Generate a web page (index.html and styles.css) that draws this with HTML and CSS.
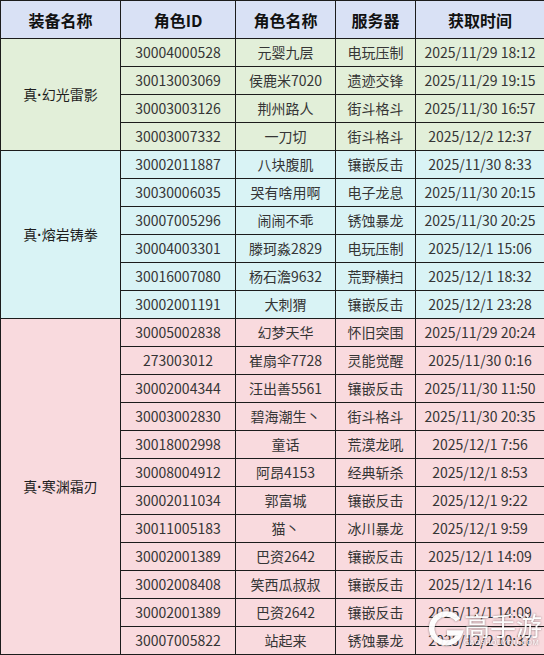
FILE: index.html
```html
<!DOCTYPE html>
<html lang="zh">
<head>
<meta charset="utf-8">
<link rel="stylesheet" href="styles.css">
</head>
<body>
<div class="wrap">
<table class="tbl">
<colgroup>
<col class="c1"><col class="c2"><col class="c3"><col class="c4"><col class="c5">
</colgroup>
<thead>
<tr class="head"><th>装备名称</th><th>角色ID</th><th>角色名称</th><th>服务器</th><th>获取时间</th></tr>
</thead>
<tbody class="g1">
<tr><td rowspan="4" class="equip">真<span class="dot">·</span>幻光雷影</td><td>30004000528</td><td>元婴九层</td><td>电玩压制</td><td>2025/11/29 18:12</td></tr>
<tr><td>30013003069</td><td>侯鹿米7020</td><td>遗迹交锋</td><td>2025/11/29 19:15</td></tr>
<tr><td>30003003126</td><td>荆州路人</td><td>街斗格斗</td><td>2025/11/30 16:57</td></tr>
<tr><td>30003007332</td><td>一刀切</td><td>街斗格斗</td><td>2025/12/2 12:37</td></tr>
</tbody>
<tbody class="g2">
<tr><td rowspan="6" class="equip">真<span class="dot">·</span>熔岩铸拳</td><td>30002011887</td><td>八块腹肌</td><td>镶嵌反击</td><td>2025/11/30 8:33</td></tr>
<tr><td>30030006035</td><td>哭有啥用啊</td><td>电子龙息</td><td>2025/11/30 20:15</td></tr>
<tr><td>30007005296</td><td>闹闹不乖</td><td>锈蚀暴龙</td><td>2025/11/30 20:25</td></tr>
<tr><td>30004003301</td><td>滕珂淼2829</td><td>电玩压制</td><td>2025/12/1 15:06</td></tr>
<tr><td>30016007080</td><td>杨石澹9632</td><td>荒野横扫</td><td>2025/12/1 18:32</td></tr>
<tr><td>30002001191</td><td>大刺猬</td><td>镶嵌反击</td><td>2025/12/1 23:28</td></tr>
</tbody>
<tbody class="g3">
<tr><td rowspan="12" class="equip">真<span class="dot">·</span>寒渊霜刃</td><td>30005002838</td><td>幻梦天华</td><td>怀旧突围</td><td>2025/11/29 20:24</td></tr>
<tr><td>273003012</td><td>崔扇伞7728</td><td>灵能觉醒</td><td>2025/11/30 0:16</td></tr>
<tr><td>30002004344</td><td>汪出善5561</td><td>镶嵌反击</td><td>2025/11/30 11:50</td></tr>
<tr><td>30003002830</td><td>碧海潮生丶</td><td>街斗格斗</td><td>2025/11/30 20:35</td></tr>
<tr><td>30018002998</td><td>童话</td><td>荒漠龙吼</td><td>2025/12/1 7:56</td></tr>
<tr><td>30008004912</td><td>阿昂4153</td><td>经典斩杀</td><td>2025/12/1 8:53</td></tr>
<tr><td>30002011034</td><td>郭富城</td><td>镶嵌反击</td><td>2025/12/1 9:22</td></tr>
<tr><td>30011005183</td><td>猫丶</td><td>冰川暴龙</td><td>2025/12/1 9:59</td></tr>
<tr><td>30002001389</td><td>巴资2642</td><td>镶嵌反击</td><td>2025/12/1 14:09</td></tr>
<tr><td>30002008408</td><td>笑西瓜叔叔</td><td>镶嵌反击</td><td>2025/12/1 14:16</td></tr>
<tr><td>30002001389</td><td>巴资2642</td><td>镶嵌反击</td><td>2025/12/1 14:09</td></tr>
<tr><td>30007005822</td><td>站起来</td><td>锈蚀暴龙</td><td>2025/12/2 10:37</td></tr>
</tbody>
</table>
<div class="mark">
<svg class="mark-g" width="36" height="36" viewBox="0 0 36 36"><path d="M30 9 A14.5 14.5 0 1 0 32 22 L19 22" fill="none" stroke="#fff" stroke-width="5.5" stroke-linecap="butt"/></svg>
<div class="mark-txt"><span class="mark-cn">高手游</span><span class="mark-en">GAOSHOUYOU.COM</span></div>
</div>
</div>
</body>
</html>
```
FILE: styles.css
```css
html, body { margin: 0; padding: 0; background: #fff; }
body { font-family: "Noto Sans CJK SC", "Open Sans", sans-serif; }
.wrap { position: relative; width: 544px; height: 655px; overflow: hidden; }
.tbl { border-collapse: collapse; table-layout: fixed; width: 544px; }
.c1 { width: 120px; } .c2 { width: 115px; } .c3 { width: 100px; } .c4 { width: 80px; } .c5 { width: 129px; }
.tbl th, .tbl td { border: 1px solid #1c1c1c; padding: 0; text-align: center; white-space: nowrap; overflow: hidden; }
.head { height: 38px; background: #d9e1f5; }
.head th { font-size: 16px; font-weight: 700; color: #111; }
.tbl td { height: 27px; font-size: 14px; color: #353535; line-height: 27px; }
.g1 td { background: #e2efd9; }
.g2 td { background: #d9f3f5; }
.g3 td { background: #f9dade; }
.equip { color: #1e1e1e !important; }
.dot { font-family: "Liberation Sans", sans-serif; font-weight: 700; }
.mark { position: absolute; left: 428px; top: 611px; display: flex; align-items: flex-start; opacity: 0.95; filter: drop-shadow(0 0 1px rgba(0,0,0,0.45)); }
.mark-g { display: block; flex: none; }
.mark-txt { display: flex; flex-direction: column; align-items: flex-start; width: 82px; white-space: nowrap; }
.mark-cn { color: #fff; font-size: 26px; line-height: 28px; }
.mark-en { color: #fff; font-size: 7px; line-height: 8px; letter-spacing: 0.6px; font-family: "Open Sans", sans-serif; }
```
